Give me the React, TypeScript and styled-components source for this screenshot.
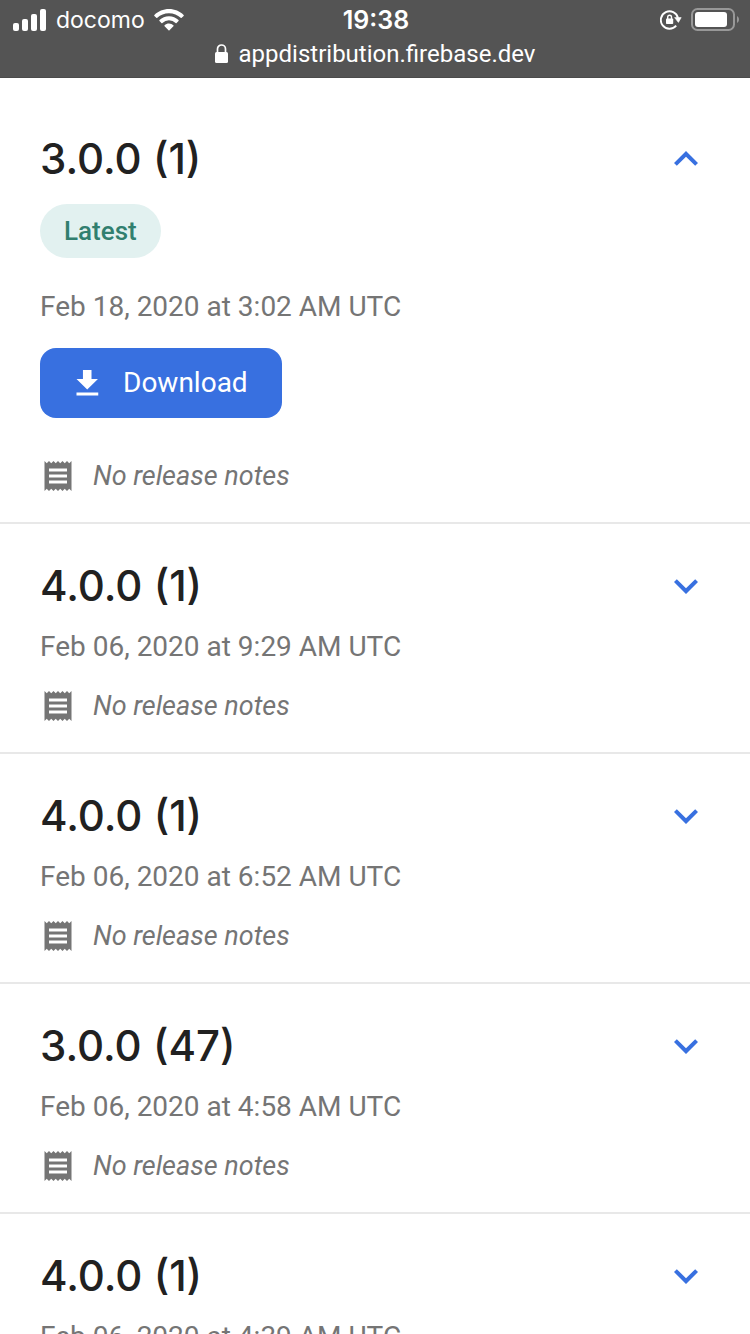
import React, { useState } from "react";
import styled, { createGlobalStyle } from "styled-components";

const GlobalStyle = createGlobalStyle`
  *, *::before, *::after { box-sizing: border-box; }
  html { scrollbar-width: none; }
  body {
    margin: 0;
    background: #fff;
    color: #212121;
    font-family: Roboto, "Liberation Sans", sans-serif;
  }
`;

const BrowserBar = styled.header`
  position: sticky;
  top: 0;
  z-index: 1;
  height: 78px;
  background: #545454;
  border-bottom: 1px solid #4b4b4b;
  color: #fff;
`;

const StatusRow = styled.div`
  display: grid;
  grid-template-columns: 1fr auto 1fr;
  align-items: center;
  height: 40px;
  padding: 0 11px 0 13px;
  font-family: Inter, "Liberation Sans", sans-serif;
`;

const StatusGroup = styled.div<{ $end?: boolean }>`
  display: flex;
  align-items: center;
  gap: 9px;
  justify-content: ${(p) => (p.$end ? "flex-end" : "flex-start")};
`;

const Carrier = styled.span`
  font-size: 23px;
  line-height: 30px;
`;

const Clock = styled.time`
  font-size: 25px;
  font-weight: 600;
`;

const AddressRow = styled.div`
  display: flex;
  align-items: center;
  justify-content: center;
  gap: 10px;
  height: 28px;
  font-size: 24px;
`;

const ReleaseList = styled.main`
  padding-top: 19px;
`;

const ReleaseRow = styled.article`
  display: flex;
  flex-direction: column;
  align-items: flex-start;
  padding: 36px 40px 28px;
  border-bottom: 2px solid #e8e8e8;
`;

const ReleaseHeader = styled.div`
  display: flex;
  align-items: center;
  justify-content: space-between;
  width: 100%;
  height: 52px;
`;

const Version = styled.h2`
  margin: 0;
  font-family: Inter, "Liberation Sans", sans-serif;
  font-size: 42px;
  font-weight: 500;
  line-height: 52px;
`;

const ToggleButton = styled.button`
  display: flex;
  padding: 0;
  border: 0;
  background: none;
  color: #3870e0;
  cursor: pointer;
`;

const Badge = styled.span`
  margin: 19px 0 14px;
  padding: 0 24px;
  border-radius: 27px;
  background: #e2f1f0;
  color: #317f6f;
  font-size: 26px;
  font-weight: 500;
  line-height: 54px;
`;

const ReleaseDate = styled.time`
  margin-top: 19px;
  color: #757575;
  font-size: 28px;
  line-height: 32px;
`;

const DownloadButton = styled.button`
  display: flex;
  align-items: center;
  gap: 18px;
  height: 70px;
  margin: 25px 0 15px;
  padding: 0 34px 0 29px;
  border: 0;
  border-radius: 16px;
  background: #3870e0;
  color: #fff;
  font-family: inherit;
  font-size: 28px;
  line-height: 32px;
  cursor: pointer;
`;

const Notes = styled.p`
  display: flex;
  align-items: center;
  gap: 17px;
  height: 36px;
  margin: 25px 0 0;
  color: #757575;
  font-size: 27px;
  font-style: italic;
  line-height: 33px;
`;

const SignalIcon = () => (
  <svg width="34" height="22" viewBox="0 0 34 22" fill="currentColor" aria-hidden="true">
    <rect x="0" y="14" width="6" height="8" rx="2" />
    <rect x="9" y="10" width="6" height="12" rx="2" />
    <rect x="18" y="5" width="6" height="17" rx="2" />
    <rect x="27" y="0" width="6" height="22" rx="2" />
  </svg>
);

const WifiIcon = () => (
  <svg width="30" height="22" viewBox="0 0 30 22" fill="currentColor" aria-hidden="true">
    <path d="M15 0C9.300 0 4.100 2.200.4 5.900a.7.7 0 0 0 0 1l1.900 1.900c.3.300.7.300 1 0A16.800 16.800 0 0 1 15 4.200c4.500 0 8.700 1.700 11.700 4.600.3.300.7.300 1 0l1.900-1.900a.7.7 0 0 0 0-1C25.900 2.200 20.700 0 15 0z" />
    <path d="M15 7.300c-3.700 0-7 1.400-9.500 3.800a.7.7 0 0 0 0 1l1.900 1.900c.3.300.7.300 1 0a9.500 9.500 0 0 1 13.200 0c.3.300.7.300 1 0l1.900-1.900a.7.7 0 0 0 0-1A13.700 13.700 0 0 0 15 7.300z" />
    <path d="M15 14.600c-1.700 0-3.200.6-4.400 1.700a.7.7 0 0 0 0 1l3.900 3.900c.3.300.7.300 1 0l3.900-3.900a.7.7 0 0 0 0-1 6.400 6.400 0 0 0-4.400-1.700z" />
  </svg>
);

const RotationLockIcon = () => (
  <svg width="22" height="20" viewBox="0 0 22 20" fill="none" aria-hidden="true">
    <path d="M18 8A8.700 8.700 0 1 0 16.200 15.600" stroke="currentColor" strokeWidth="1.900" />
    <path d="M14.600 7.600h6.600l-2.800 4.800z" fill="currentColor" stroke="currentColor" strokeWidth="0.600" />
    <rect x="6" y="8.500" width="7.200" height="5.600" rx="0.8" fill="currentColor" />
    <path d="M7.700 9V7.200a1.900 1.900 0 0 1 3.800 0V9" stroke="currentColor" strokeWidth="1.400" />
  </svg>
);

const BatteryIcon = () => (
  <svg width="48" height="24" viewBox="0 0 48 24" aria-hidden="true">
    <rect x="1" y="1" width="42" height="21" rx="5.500" fill="none" stroke="#989898" strokeWidth="2" />
    <rect x="4" y="4" width="32" height="15" rx="3" fill="currentColor" />
    <path d="M46 8c1.300.8 2 2 2 3.500S47.300 14.200 46 15z" fill="#989898" />
  </svg>
);

const LockIcon = () => (
  <svg width="14" height="20" viewBox="0 0 14 20" aria-hidden="true">
    <rect x="0" y="8" width="13" height="11" rx="1.500" fill="currentColor" />
    <path d="M2.500 9V5a4 4 0 0 1 8 0v4" fill="none" stroke="currentColor" strokeWidth="1.700" />
  </svg>
);

const ChevronIcon = ({ up }: { up: boolean }) => (
  <svg width="48" height="48" viewBox="0 0 24 24" fill="currentColor" aria-hidden="true">
    <path
      d={
        up
          ? "M12 8l-6 6 1.410 1.410L12 10.830l4.590 4.580L18 14z"
          : "M16.590 8.590L12 13.170 7.410 8.590 6 10l6 6 6-6z"
      }
    />
  </svg>
);

const DownloadIcon = () => (
  <svg width="36" height="36" viewBox="0 0 24 24" fill="currentColor" aria-hidden="true">
    <path d="M19.300 9.300h-4.300V3.300H9.300v6H5l7.150 7zM5 18.400v2h14.500v-2z" />
  </svg>
);

const ReceiptIcon = () => (
  <svg width="36" height="36" viewBox="0 0 24 24" fill="currentColor" aria-hidden="true">
    <path d="M18 17H6v-2h12v2zm0-4H6v-2h12v2zm0-4H6V7h12v2zM3 22l1.500-1.500L6 22l1.500-1.500L9 22l1.500-1.500L12 22l1.500-1.500L15 22l1.500-1.500L18 22l1.500-1.500L21 22V2l-1.500 1.500L18 2l-1.500 1.500L15 2l-1.500 1.500L12 2l-1.500 1.500L9 2 7.500 3.500 6 2 4.500 3.500 3 2v20z" />
  </svg>
);

interface ReleaseData {
  version: string;
  date: string;
  latest?: boolean;
}

const releases: ReleaseData[] = [
  { version: "3.0.0 (1)", date: "Feb 18, 2020 at 3:02 AM UTC", latest: true },
  { version: "4.0.0 (1)", date: "Feb 06, 2020 at 9:29 AM UTC" },
  { version: "4.0.0 (1)", date: "Feb 06, 2020 at 6:52 AM UTC" },
  { version: "3.0.0 (47)", date: "Feb 06, 2020 at 4:58 AM UTC" },
  { version: "4.0.0 (1)", date: "Feb 06, 2020 at 4:39 AM UTC" },
];

function Release({ version, date, latest = false }: ReleaseData) {
  const [open, setOpen] = useState(latest);
  return (
    <ReleaseRow>
      <ReleaseHeader>
        <Version>{version}</Version>
        <ToggleButton
          type="button"
          aria-expanded={open}
          aria-label={open ? "Collapse release" : "Expand release"}
          onClick={() => setOpen(!open)}
        >
          <ChevronIcon up={open} />
        </ToggleButton>
      </ReleaseHeader>
      {latest && <Badge>Latest</Badge>}
      <ReleaseDate>{date}</ReleaseDate>
      {open && (
        <DownloadButton type="button">
          <DownloadIcon />
          Download
        </DownloadButton>
      )}
      <Notes>
        <ReceiptIcon />
        No release notes
      </Notes>
    </ReleaseRow>
  );
}

export default function App() {
  return (
    <>
      <GlobalStyle />
      <BrowserBar>
        <StatusRow>
          <StatusGroup>
            <SignalIcon />
            <Carrier>docomo</Carrier>
            <WifiIcon />
          </StatusGroup>
          <Clock>19:38</Clock>
          <StatusGroup $end>
            <RotationLockIcon />
            <BatteryIcon />
          </StatusGroup>
        </StatusRow>
        <AddressRow>
          <LockIcon />
          <span>appdistribution.firebase.dev</span>
        </AddressRow>
      </BrowserBar>
      <ReleaseList>
        {releases.map((release) => (
          <Release key={release.date} {...release} />
        ))}
      </ReleaseList>
    </>
  );
}
